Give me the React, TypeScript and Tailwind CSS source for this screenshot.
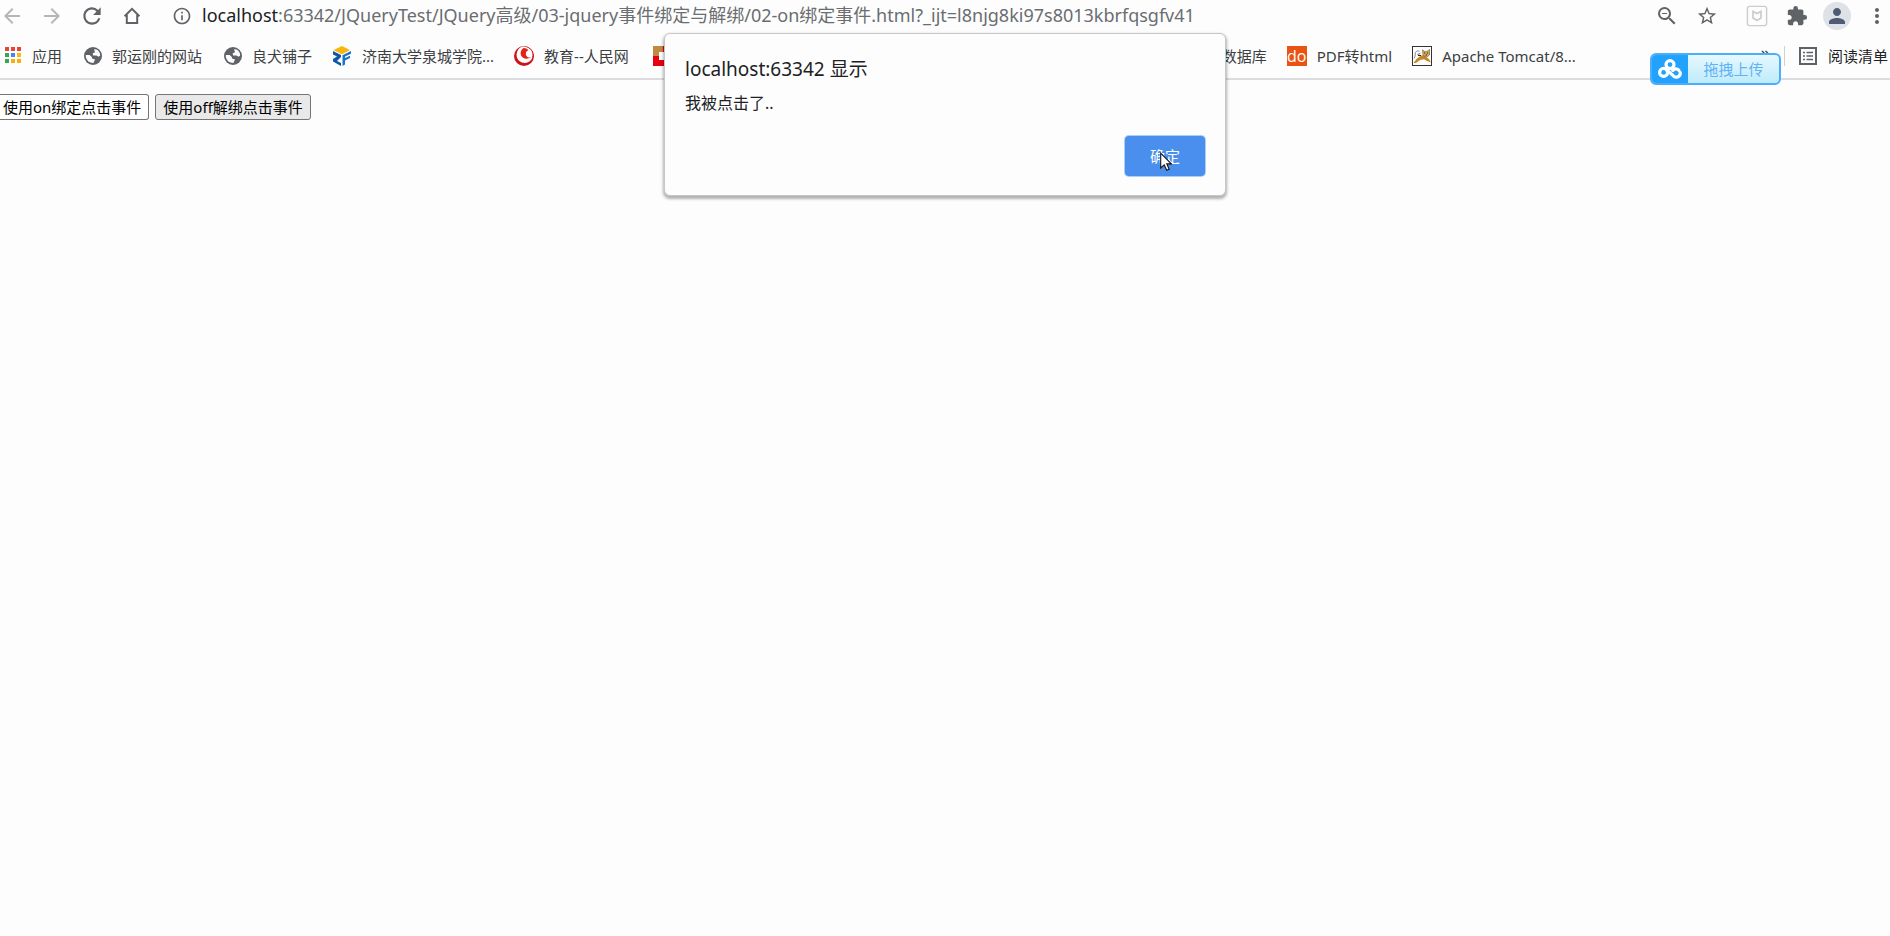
import type { ReactNode } from "react";
import {
    MdArrowBack,
    MdArrowForward,
    MdExtension,
    MdMoreVert,
    MdOutlineInfo,
    MdPerson,
    MdRefresh,
    MdStarBorder,
    MdZoomOut,
} from "react-icons/md";

function HomeIcon() {
    return (
        <svg viewBox="0 0 24 24" className="h-6 w-6" fill="none" stroke="#5f6368" strokeWidth="2">
            <path d="M6.8 11V19H17.2V11M4.6 12.2L12 4.9L19.4 12.2" />
        </svg>
    );
}

function ShieldIcon() {
    return (
        <svg viewBox="0 0 24 24" className="h-6 w-6" fill="none" stroke="#cbcdcd">
            <rect x="2.4" y="2.4" width="19.2" height="19.2" rx="2" strokeWidth="1.4" />
            <path d="M8 7.5L12 9.5L16 7.5V14L12 16.5L8 14Z" strokeWidth="1.7" />
        </svg>
    );
}

function AppsIcon() {
    const colors = ["#ea4335", "#ea4335", "#ea4335", "#34a853", "#4285f4", "#fbbc04", "#34a853", "#fbaf04", "#fbaf04"];
    return (
        <svg viewBox="0 0 20 20" className="h-5 w-5">
            {colors.map((color, i) => (
                <rect key={i} x={3 + (i % 3) * 6} y={1 + Math.floor(i / 3) * 6} width="4" height="4" fill={color} />
            ))}
        </svg>
    );
}

function GlobeIcon() {
    return (
        <svg viewBox="0 0 20 20" className="h-5 w-5">
            <circle cx="11" cy="10" r="9" fill="#5f6368" />
            <path d="M12 3.2L14.5 3.6Q18 5.6 18.2 9.5L16.6 10.8L14.5 9.6H11.2L10.6 7.4L13 6.2Z" fill="#fdfdfd" />
            <path d="M3.8 9H7.6L9.8 11L10 12.6L13 13.4L12.2 15.2L11.4 17Q5 17 3.8 10.8Z" fill="#fdfdfd" />
        </svg>
    );
}

function CollegeIcon() {
    return (
        <svg viewBox="0 0 20 20" className="h-5 w-5">
            <path d="M10 0L18 4L10 8.2L1.5 4Z" fill="#f9b50b" />
            <path d="M1 5L9 9V11L5 15L9 17V20L1 15.5V13L5 10.5L1 8.5Z" fill="#0e57a8" />
            <path d="M19 5L10.5 9.2V20L13 18.5V14.5L18 12V9.8L13 12V10.5L19 7.8Z" fill="#1b74c9" />
        </svg>
    );
}

function PeopleIcon() {
    return (
        <svg viewBox="0 0 20 20" className="h-5 w-5">
            <circle cx="10" cy="10" r="10" fill="#cf1019" />
            <path d="M8.5 0.5A8.6 8.6 0 0 0 6 15.5A8.5 8.5 0 0 0 19 10A9.5 9.5 0 0 0 8.5 0.5Z" fill="#fff" />
            <path d="M9.5 2Q5.5 5 7 9.5Q9.5 14.5 17.5 11.5Q13 12 12 9Q11 5.5 14.5 4.2Q12.5 1.8 9.5 2Z" fill="#e2231a" />
            <path d="M12 1Q17.5 2 18.5 7Q19 10 17.5 12.5L19.8 10.5Q19.6 3.5 12.5 0.4Z" fill="#cf1019" />
        </svg>
    );
}

function RedBadgeIcon() {
    return (
        <svg viewBox="0 0 20 20" className="h-5 w-5">
            <rect width="20" height="20" fill="#e60012" />
            <rect width="10" height="10" fill="#bf8a44" />
            <rect x="6" y="6" width="8" height="8" fill="#fff" />
        </svg>
    );
}

function DoIcon() {
    return (
        <span className="flex h-5 w-5 items-center justify-center bg-[#e85412] font-['Open_Sans',sans-serif] text-base leading-5 text-white">
            do
        </span>
    );
}

function TomcatIcon() {
    return (
        <svg viewBox="0 0 20 20" className="h-5 w-5">
            <rect x="0.5" y="0.5" width="19" height="19" fill="#fff" stroke="#333" />
            <path d="M1.5 17L4.5 13L9 9.5L12 9.5L17 13L19 16.5L15 15L12 13.2L8 14L4 17Z" fill="#c98526" />
            <path d="M10.5 3.8L12.5 5.4H15L17.5 3.5V9L14.5 11.2L11 9.5Z" fill="#d9ab58" stroke="#6b5a37" strokeWidth="0.6" />
            <path d="M7.5 5Q3 4.5 3.2 8Q3.5 10 2 12.5M8.5 7L5.5 8.4L8 9.5" fill="none" stroke="#888" strokeWidth="1" />
            <path d="M12 7H13.2M15 7H16.2M13.5 9H15M6 9.5H9" stroke="#222" />
        </svg>
    );
}

function ReadingListIcon() {
    return (
        <svg viewBox="0 0 18 18" className="h-[18px] w-[18px]" fill="none" stroke="#5f6368" strokeWidth="2">
            <rect x="1" y="1" width="16" height="16" />
            <path d="M4 5.5H6M4 9H6M4 12.5H6M7.5 5.5H14M7.5 9H14M7.5 12.5H14" strokeWidth="1.4" />
        </svg>
    );
}

function CloudIcon() {
    return (
        <svg viewBox="0 0 24 20" className="h-5 w-6" fill="none" stroke="#fff" strokeWidth="3.2" strokeLinecap="round">
            <circle cx="12" cy="5.6" r="4" />
            <circle cx="5.6" cy="13.4" r="4" />
            <path d="M8.6 10.6L14.8 16.2A4 4 0 0 0 22.2 13.6M14.8 11.4A4 4 0 0 1 20.8 11.2" />
        </svg>
    );
}

function CursorIcon() {
    return (
        <svg viewBox="0 0 12 19" className="h-[19px] w-3">
            <path d="M0.7 1.2V16L4.2 12.8L6.7 18.3L9.2 17.2L6.8 11.9H11.3Z" fill="#fff" stroke="#111" strokeWidth="1.1" />
        </svg>
    );
}

type BookmarkProps = { icon: ReactNode; label: string; className?: string };

function Bookmark({ icon, label, className = "" }: BookmarkProps) {
    return (
        <a href="#" className={`flex shrink-0 items-center gap-[10px] whitespace-nowrap ${className}`}>
            {icon}
            <span>{label}</span>
        </a>
    );
}

const bookmarks: BookmarkProps[] = [
    { icon: <AppsIcon />, label: "应用" },
    { icon: <GlobeIcon />, label: "郭运刚的网站" },
    { icon: <GlobeIcon />, label: "良犬铺子" },
    { icon: <CollegeIcon />, label: "济南大学泉城学院..." },
    { icon: <PeopleIcon />, label: "教育--人民网" },
    { icon: <RedBadgeIcon />, label: "数据库", className: "ml-1 w-[614px] justify-between" },
    { icon: <DoIcon />, label: "PDF转html" },
    { icon: <TomcatIcon />, label: "Apache Tomcat/8..." },
];

function Toolbar() {
    return (
        <div className="flex h-8 items-center pr-px text-[#5f6368]">
            <div className="flex items-center gap-4">
                <button aria-label="后退" className="text-[#b4b6b9]">
                    <MdArrowBack className="h-6 w-6" />
                </button>
                <button aria-label="前进" className="text-[#b4b6b9]">
                    <MdArrowForward className="h-6 w-6" />
                </button>
                <button aria-label="重新加载" className="-mx-px">
                    <MdRefresh className="h-[26px] w-[26px]" />
                </button>
                <button aria-label="主页">
                    <HomeIcon />
                </button>
            </div>
            <button aria-label="网站信息" className="ml-7">
                <MdOutlineInfo className="h-5 w-5" />
            </button>
            <div className="ml-[10px] flex-1 overflow-hidden pb-[2px] text-lg leading-[30px] whitespace-nowrap text-[#6a6d71]">
                <span className="text-[#202124]">localhost</span>
                :63342/JQueryTest/JQuery高级/03-jquery事件绑定与解绑/02-on绑定事件.html?_ijt=l8njg8ki97s8013kbrfqsgfv41
            </div>
            <div className="flex items-center gap-4">
                <button aria-label="缩小">
                    <MdZoomOut className="h-6 w-6" />
                </button>
                <button aria-label="收藏">
                    <MdStarBorder className="h-[22px] w-6" />
                </button>
                <button aria-label="安全插件" className="ml-[10px]">
                    <ShieldIcon />
                </button>
                <button aria-label="扩展程序">
                    <MdExtension className="h-[22px] w-6" />
                </button>
                <button
                    aria-label="用户"
                    className="-mx-[2px] flex h-7 w-7 items-center justify-center rounded-full bg-[#dee1e6]"
                >
                    <MdPerson className="h-6 w-6 text-[#4f5b74]" />
                </button>
                <button aria-label="更多">
                    <MdMoreVert className="h-6 w-6" />
                </button>
            </div>
        </div>
    );
}

function BookmarkBar() {
    return (
        <div className="flex h-12 items-center border-b-2 border-[#dadce0] pt-[2px] text-[15px] text-[#3c4043]">
            <nav className="flex flex-1 items-center gap-5 overflow-hidden pl-[2px]">
                {bookmarks.map((item) => (
                    <Bookmark key={item.label} {...item} />
                ))}
            </nav>
            <button aria-label="更多书签" className="mr-[14px] pb-2 text-lg">
                »
            </button>
            <div className="h-5 border-l border-[#cfd1d5]" />
            <button className="ml-[14px] flex items-center gap-[11px] pr-[2px] text-[#202124]">
                <ReadingListIcon />
                阅读清单
            </button>
        </div>
    );
}

function AlertDialog() {
    return (
        <div
            role="alertdialog"
            aria-labelledby="alert-title"
            className="absolute top-[33px] left-1/2 w-[562px] -translate-x-1/2 rounded-md border border-[#c6c7ca] bg-[#fdfdfd] px-5 pt-[21px] pb-[19px] text-[#202124] shadow-[0_2px_3px_1px_rgba(0,0,0,0.3)]"
        >
            <h2 id="alert-title" className="text-[19px] leading-7">
                localhost:63342 显示
            </h2>
            <p className="mt-2 text-base leading-6">我被点击了..</p>
            <div className="mt-[21px] flex justify-end">
                <button className="relative h-10 w-20 rounded bg-[#4a8fee] text-[15px] text-white ring-1 ring-[#a8cff9]">
                    确定
                    <span className="absolute top-4 left-[35px]">
                        <CursorIcon />
                    </span>
                </button>
            </div>
        </div>
    );
}

function UploadBadge() {
    return (
        <button className="absolute top-[53px] right-[109px] flex h-8 w-[131px] items-stretch overflow-hidden rounded-md border-2 border-[#4aaefa] bg-linear-to-b from-[#e6f8fe] to-[#bfebfb] text-[15px] text-[#62b2f7]">
            <span className="flex w-9 items-center justify-center bg-[#22a1fd]">
                <CloudIcon />
            </span>
            <span className="flex flex-1 items-center justify-center">拖拽上传</span>
        </button>
    );
}

export default function App() {
    return (
        <div className="relative min-h-screen bg-[#fdfdfd] font-['Noto_Sans','Noto_Sans_CJK_SC',sans-serif]">
            <header>
                <Toolbar />
                <BookmarkBar />
            </header>
            <main className="flex gap-[6px] pt-[14px] text-[15px] leading-6 text-black">
                <button className="rounded-r-[3px] border border-l-0 border-[#767676] bg-white pr-[7px] pl-[3px]">
                    使用on绑定点击事件
                </button>
                <button className="rounded-[3px] border border-[#767676] bg-[#e9e9e9] px-[7px]">
                    使用off解绑点击事件
                </button>
            </main>
            <AlertDialog />
            <UploadBadge />
        </div>
    );
}
